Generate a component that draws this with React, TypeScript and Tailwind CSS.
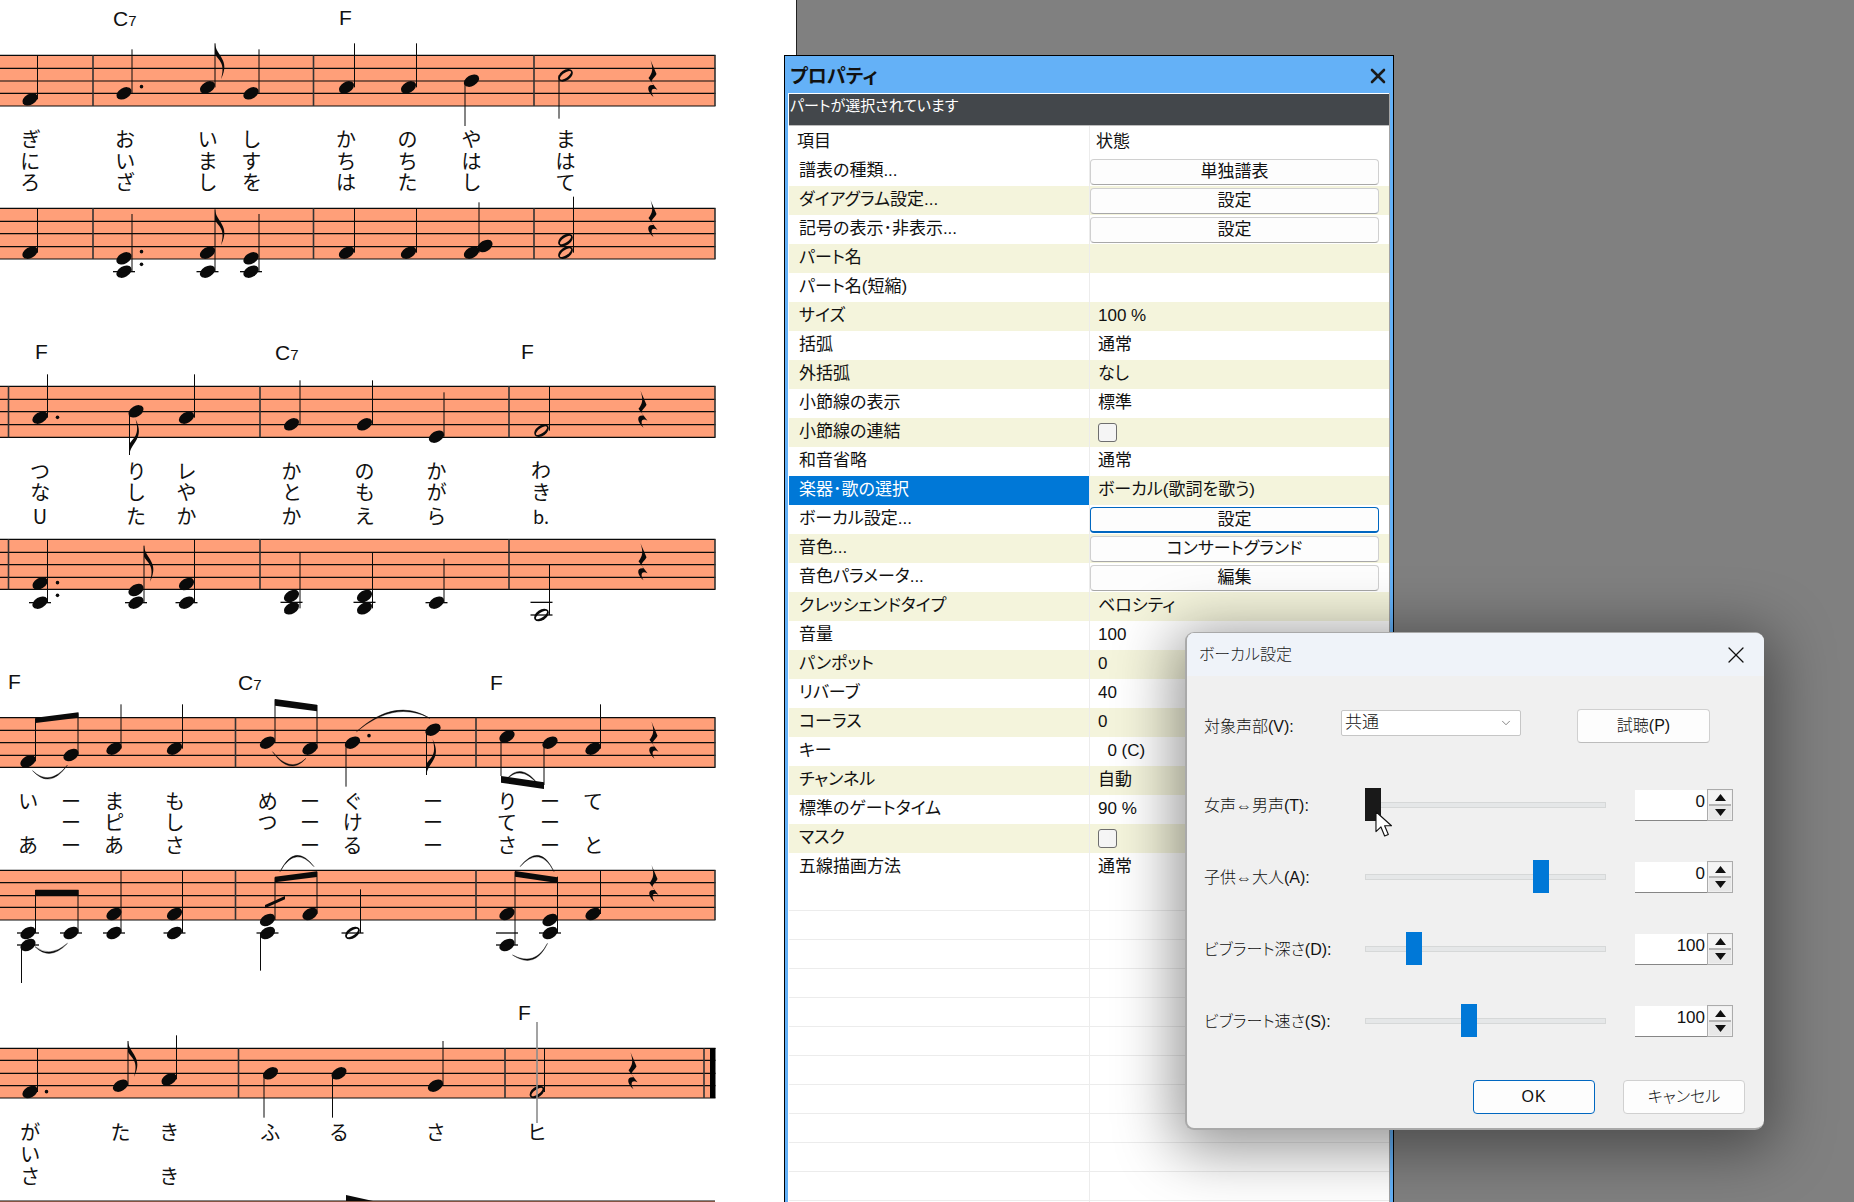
import React from "react";
import { X, ChevronDown } from "lucide-react";

type E = React.ReactNode;
const SX = (x: number) => x / 2;
const FONT = "'Noto Sans CJK JP', sans-serif";
const INK = "#0a0a0a";

function Staff({ off, lines, bars }: { off: number; lines: number[]; bars: number[] }) {
  const Y = (y: number) => y / 3 + off;
  const t = Y(lines[0]);
  const b = Y(lines[4]);
  return (
    <g>
      <rect x={0} y={t} width={715} height={b - t} fill="#ff9f79" />
      {lines.map((l, i) => (
        <line key={i} x1={0} x2={715.5} y1={Y(l)} y2={Y(l)} stroke={INK} strokeWidth={1.2} />
      ))}
      {bars.map((x, i) => (
        <line key={i} x1={SX(x)} x2={SX(x)} y1={t} y2={b} stroke="#333" strokeWidth={1.6} />
      ))}
    </g>
  );
}

function noteEls(off: number, list: any[]): E[] {
  const Y = (y: number) => y / 3 + off;
  const out: E[] = [];
  list.forEach((n, i) => {
    if (n.h) {
      n.h.forEach((p: number[], j: number) => {
        out.push(
          <ellipse key={`h${i}-${j}`} cx={SX(p[0])} cy={Y(p[1])} rx={8.2} ry={5.4} fill={INK} transform={`rotate(-30 ${SX(p[0])} ${Y(p[1])})`} />
        );
      });
    }
    if (n.o) {
      n.o.forEach((p: number[], j: number) => {
        const cx = SX(p[0]);
        const cy = Y(p[1]);
        out.push(
          <g key={`o${i}-${j}`} transform={`rotate(-35 ${cx} ${cy})`}>
            <ellipse cx={cx} cy={cy} rx={8.2} ry={5.2} fill={INK} />
            <ellipse cx={cx} cy={cy} rx={6.6} ry={2.5} fill={n.w ?? "#ff9f79"} />
          </g>
        );
      });
    }
    if (n.s) {
      const [x, a, z] = n.s;
      out.push(<line key={`s${i}`} x1={SX(x)} x2={SX(x)} y1={Y(a)} y2={Y(z)} stroke={INK} strokeWidth={1} />);
    }
    if (n.d) {
      n.d.forEach((p: number[], j: number) => {
        out.push(<circle key={`d${i}-${j}`} cx={SX(p[0])} cy={Y(p[1])} r={1.8} fill={INK} />);
      });
    }
    if (n.l) {
      n.l.forEach((p: number[], j: number) => {
        out.push(<line key={`l${i}-${j}`} x1={SX(p[0]) - 11} x2={SX(p[0]) + 11} y1={Y(p[1])} y2={Y(p[1])} stroke={INK} strokeWidth={1.3} />);
      });
    }
    if (n.fu) {
      const x = SX(n.fu[0]);
      const y = Y(n.fu[1]);
      out.push(<path key={`f${i}`} d={`M${x} ${y}C${x + 1} ${y + 13} ${x + 16} ${y + 16} ${x + 6} ${y + 36}C${x + 11} ${y + 19} ${x + 3} ${y + 17} ${x} ${y + 11}Z`} fill={INK} />);
    }
    if (n.fd) {
      const x = SX(n.fd[0]);
      const y = Y(n.fd[1]);
      out.push(<path key={`f${i}`} d={`M${x} ${y}C${x + 1} ${y - 13} ${x + 16} ${y - 16} ${x + 6} ${y - 36}C${x + 11} ${y - 19} ${x + 3} ${y - 17} ${x} ${y - 11}Z`} fill={INK} />);
    }
    if (n.r) {
      const x = SX(n.r[0]) - 2;
      const y = Y(n.r[1]);
      out.push(<path key={`r${i}`} d={`M${x} ${y}L${x + 6} ${y + 14}C${x + 5} ${y + 17} ${x + 1} ${y + 19} ${x + 1} ${y + 22}L${x + 7} ${y + 30}C${x + 2} ${y + 27} ${x - 1} ${y + 30} ${x + 3} ${y + 37}C${x - 4} ${y + 31} ${x - 4} ${y + 24} ${x + 3} ${y + 25}L${x - 2} ${y + 18}C${x + 2} ${y + 13} ${x + 3} ${y + 9} ${x} ${y}Z`} fill={INK} />);
    }
    if (n.b) {
      const [x1, y1, x2, y2, th] = n.b;
      out.push(<polygon key={`b${i}`} points={`${SX(x1)},${Y(y1)} ${SX(x2)},${Y(y2)} ${SX(x2)},${Y(y2 + th)} ${SX(x1)},${Y(y1 + th)}`} fill={INK} />);
    }
    if (n.c) {
      const [x1, y1, cx, cy, x2, y2] = n.c;
      out.push(<path key={`c${i}`} d={`M${SX(x1)} ${Y(y1)}Q${SX(cx)} ${Y(cy)} ${SX(x2)} ${Y(y2)}Q${SX(cx)} ${Y(cy + (cy > y1 ? -9 : 9))} ${SX(x1)} ${Y(y1)}Z`} fill={INK} stroke={INK} strokeWidth={0.4} />);
    }
  });
  return out;
}

function Lyrics({ off, ys, cols }: { off: number; ys: number[]; cols: [number, string][] }) {
  return (
    <g fontFamily={FONT} fontSize={20} fill="#111" textAnchor="middle">
      {cols.map(([x, s], i) =>
        Array.from(s).map((ch, j) =>
          ch === " " ? null : (
            <text key={`${i}-${j}`} x={SX(x)} y={ys[j] / 3 + off + 7}>
              {ch}
            </text>
          )
        )
      )}
    </g>
  );
}

function Chord({ x, y, t, sub }: { x: number; y: number; t: string; sub?: string }) {
  return (
    <text x={x} y={y} fontFamily="'Liberation Sans', sans-serif" fontSize={21} fill="#111">
      {t}
      {sub && <tspan fontSize={15}>{sub}</tspan>}
    </text>
  );
}

function Score() {
  return (
    <svg width={796} height={1202} viewBox="0 0 796 1202" className="block">
      {/* system 1 */}
      <Chord x={113} y={26} t="C" sub="7" />
      <Chord x={339} y={25} t="F" />
      <Staff off={0} lines={[166, 205, 243, 280, 318]} bars={[186, 627, 1068, 1430]} />
      <Staff off={0} lines={[625, 664, 701, 740, 777]} bars={[186, 627, 1068, 1430]} />
      {noteEls(0, [
        { h: [[60, 298]], s: [75, 166, 298] },
        { h: [[248, 280]], s: [264, 148, 280], d: [[283, 260]] },
        { h: [[415, 262]], s: [430, 130, 262], fu: [430, 130] },
        { h: [[502, 280]], s: [518, 148, 280] },
        { h: [[693, 262]], s: [709, 130, 262] },
        { h: [[817, 262]], s: [833, 130, 262] },
        { h: [[943, 242]], s: [930, 242, 378] },
        { o: [[1131, 226]], s: [1118, 226, 356] },
        { r: [1305, 180] },
        { h: [[60, 758]], s: [75, 625, 758] },
        { h: [[248, 775], [248, 815]], s: [264, 642, 815], d: [[283, 755], [283, 793]], l: [[248, 815]] },
        { h: [[415, 758], [415, 815]], s: [430, 628, 815], fu: [430, 628], l: [[415, 815]] },
        { h: [[502, 775], [502, 815]], s: [518, 642, 815], l: [[502, 815]] },
        { h: [[693, 758]], s: [709, 625, 758] },
        { h: [[817, 758]], s: [833, 625, 758] },
        { h: [[943, 758], [970, 738]], s: [958, 607, 758] },
        { o: [[1131, 720], [1131, 758]], s: [1147, 590, 758] },
        { r: [1305, 600] },
      ])}
      <Lyrics
        off={0}
        ys={[420, 485, 550]}
        cols={[
          [60, "ぎにろ"],
          [250, "おいざ"],
          [415, "いまし"],
          [503, "しすを"],
          [692, "かちは"],
          [815, "のちた"],
          [943, "やはし"],
          [1131, "まはて"],
        ]}
      />

      {/* system 2 */}
      <Chord x={35} y={359} t="F" />
      <Chord x={275} y={360} t="C" sub="7" />
      <Chord x={521} y={359} t="F" />
      <Staff off={320} lines={[199, 238, 275, 314, 352]} bars={[17, 520, 1018, 1430]} />
      <Staff off={320} lines={[658, 697, 734, 772, 808]} bars={[17, 520, 1018, 1430]} />
      {noteEls(320, [
        { h: [[80, 293]], s: [95, 163, 293], d: [[115, 292]] },
        { h: [[272, 274]], s: [259, 274, 405], fd: [259, 405] },
        { h: [[373, 293]], s: [389, 163, 293] },
        { h: [[583, 313]], s: [600, 181, 313] },
        { h: [[729, 313]], s: [745, 181, 313] },
        { h: [[873, 350]], s: [888, 217, 350] },
        { o: [[1083, 332]], s: [1099, 199, 332] },
        { r: [1285, 212] },
        { h: [[80, 790], [80, 848]], s: [95, 660, 848], d: [[115, 788], [115, 826]], l: [[80, 848]] },
        { h: [[272, 810], [272, 848]], s: [288, 677, 848], fu: [288, 677], l: [[272, 848]] },
        { h: [[373, 792], [373, 848]], s: [389, 660, 848], l: [[373, 848]] },
        { h: [[583, 828], [583, 865]], s: [600, 698, 865], l: [[583, 847]] },
        { h: [[729, 828], [729, 865]], s: [745, 698, 865], l: [[729, 847]] },
        { h: [[873, 848]], s: [888, 716, 848], l: [[873, 848]] },
        { o: [[1083, 885]], w: "#ffffff", s: [1099, 735, 885], l: [[1083, 847], [1083, 885]] },
        { r: [1285, 670] },
      ])}
      <Lyrics
        off={320}
        ys={[455, 520, 590]}
        cols={[
          [80, "つなU"],
          [272, "りした"],
          [373, "レやか"],
          [583, "かとか"],
          [729, "のもえ"],
          [873, "かがら"],
        ]}
      />
      <g fontFamily={FONT} fontSize={20} fill="#111" textAnchor="middle">
        <text x={541} y={478}>わ</text>
        <text x={541} y={500}>き</text>
        <text x={541} y={524} fontSize={18}>b.</text>
      </g>

      {/* system 3 */}
      <Chord x={8} y={689} t="F" />
      <Chord x={238} y={690} t="C" sub="7" />
      <Chord x={490} y={690} t="F" />
      <Staff off={650} lines={[203, 241, 278, 316, 352]} bars={[471, 952, 1430]} />
      <Staff off={650} lines={[661, 698, 737, 772, 810]} bars={[471, 952, 1430]} />
      {noteEls(650, [
        { h: [[56, 334]], s: [71, 205, 334] },
        { h: [[142, 315]], s: [156, 190, 315], b: [71, 203, 157, 187, 16] },
        { h: [[228, 296]], s: [242, 163, 296] },
        { h: [[349, 296]], s: [365, 163, 296] },
        { h: [[535, 278]], s: [550, 148, 278] },
        { h: [[620, 296]], s: [634, 165, 296], b: [550, 147, 634, 164, 20] },
        { h: [[705, 278]], s: [692, 278, 410], d: [[738, 257]] },
        { h: [[866, 239]], s: [853, 239, 375], fd: [853, 375] },
        { h: [[1014, 259]], s: [1002, 259, 378] },
        { h: [[1100, 278]], s: [1088, 278, 405], b: [1002, 378, 1088, 397, 20] },
        { h: [[1186, 296]], s: [1201, 163, 296] },
        { r: [1307, 215] },
        { c: [65, 362, 100, 420, 135, 345] },
        { c: [545, 305, 580, 380, 612, 325] },
        { c: [713, 245, 790, 140, 860, 205] },
        { c: [1008, 398, 1040, 325, 1080, 410] },
        { h: [[56, 849], [56, 885]], s: [43, 885, 999], l: [[56, 849], [56, 885]] },
        { s: [71, 720, 849] },
        { h: [[142, 849]], s: [156, 720, 849], b: [71, 719, 157, 719, 17], l: [[142, 849]] },
        { h: [[228, 792], [228, 849]], s: [242, 661, 849], l: [[228, 849]] },
        { h: [[349, 792], [349, 849]], s: [365, 661, 849], l: [[349, 849]] },
        { h: [[535, 810], [535, 849]], s: [521, 849, 962], l: [[535, 849]] },
        { s: [550, 682, 810] },
        { h: [[620, 792]], s: [634, 665, 792], b: [550, 680, 634, 664, 17] },
        { b: [530, 765, 570, 738, 10] },
        { o: [[705, 849]], w: "#ffffff", s: [721, 718, 849], l: [[705, 849]] },
        { h: [[1014, 792], [1014, 885]], s: [1030, 665, 885], l: [[1014, 849], [1014, 885]] },
        { h: [[1100, 810], [1100, 849]], s: [1115, 680, 849], b: [1030, 663, 1115, 682, 17], l: [[1100, 849]] },
        { h: [[1186, 792]], s: [1201, 661, 792] },
        { r: [1307, 645] },
        { c: [70, 890, 100, 935, 135, 880] },
        { c: [560, 665, 590, 575, 628, 650] },
        { c: [1040, 650, 1080, 575, 1108, 665] },
        { c: [1025, 915, 1070, 960, 1095, 880] },
      ])}
      <Lyrics
        off={650}
        ys={[455, 520, 588]}
        cols={[
          [56, "い あ"],
          [142, "ーーー"],
          [228, "まピあ"],
          [349, "もしさ"],
          [535, "めつ "],
          [620, "ーーー"],
          [705, "ぐける"],
          [866, "ーーー"],
          [1014, "りてさ"],
          [1100, "ーーー"],
          [1186, "て と"],
        ]}
      />

      {/* system 4 */}
      <Chord x={518} y={1020} t="F" />
      <Staff off={960} lines={[265, 301, 340, 377, 414]} bars={[477, 1010, 1408, 1425]} />
      <rect x={710} y={1048} width={5.5} height={50} fill="#000" />
      {noteEls(960, [
        { h: [[60, 396]], s: [75, 265, 396], d: [[93, 395]] },
        { h: [[241, 377]], s: [256, 243, 377], fu: [256, 243] },
        { h: [[338, 358]], s: [353, 226, 358] },
        { h: [[541, 340]], s: [528, 340, 473] },
        { h: [[678, 340]], s: [665, 340, 473] },
        { h: [[871, 377]], s: [886, 243, 377] },
        { o: [[1074, 396]], s: [1089, 265, 396] },
        { r: [1265, 277] },
      ])}
      <line x1={537} x2={537} y1={1022} y2={1123} stroke="#8c8c8c" strokeWidth={1.6} />
      <Lyrics
        off={960}
        ys={[520, 585, 650]}
        cols={[
          [60, "がいさ"],
          [241, "た"],
          [338, "き き"],
          [541, "ふ"],
          [678, "る"],
          [871, "さ"],
          [1074, "ヒ"],
        ]}
      />
      <rect x={0} y={1201} width={715} height={2} fill="#ff9f79" />
      <line x1={0} x2={715} y1={1201} y2={1201} stroke={INK} strokeWidth={1.2} />
      <polygon points="346,1195 373,1201 346,1201" fill={INK} />
    </svg>
  );
}

type Row = { k: string; v?: string; btn?: string; focus?: boolean; check?: boolean; sel?: boolean };
const rows: Row[] = [
  { k: "譜表の種類...", btn: "単独譜表" },
  { k: "ダイアグラム設定...", btn: "設定" },
  { k: "記号の表示･非表示...", btn: "設定" },
  { k: "パート名" },
  { k: "パート名(短縮)" },
  { k: "サイズ", v: "100 %" },
  { k: "括弧", v: "通常" },
  { k: "外括弧", v: "なし" },
  { k: "小節線の表示", v: "標準" },
  { k: "小節線の連結", check: true },
  { k: "和音省略", v: "通常" },
  { k: "楽器･歌の選択", v: "ボーカル(歌詞を歌う)", sel: true },
  { k: "ボーカル設定...", btn: "設定", focus: true },
  { k: "音色...", btn: "コンサートグランド" },
  { k: "音色パラメータ...", btn: "編集" },
  { k: "クレッシェンドタイプ", v: "ベロシティ" },
  { k: "音量", v: "100" },
  { k: "パンポット", v: "0" },
  { k: "リバーブ", v: "40" },
  { k: "コーラス", v: "0" },
  { k: "キー", v: "\u00a0\u00a00 (C)" },
  { k: "チャンネル", v: "自動" },
  { k: "標準のゲートタイム", v: "90 %" },
  { k: "マスク", check: true },
  { k: "五線描画方法", v: "通常" },
];

function PropRow({ r, i }: { r: Row; i: number }) {
  const beige = i % 2 === 1;
  return (
    <div className={`grid grid-cols-[300px_1px_299px] h-[29px] text-[17px] leading-[27px] text-[#111] ${beige ? "bg-[#f4f4dc]" : "bg-white"}`}>
      <div className={`pl-[10px] whitespace-nowrap ${r.sel ? "bg-[#0078d7] text-white" : ""}`}>{r.k}</div>
      <div className="bg-[#ececec]" />
      <div className="pl-[8px] pr-[2px] flex items-center whitespace-nowrap">
        {r.v && <span className="leading-[27px] self-start">{r.v}</span>}
        {r.btn && (
          <div
            className={`w-full h-[26px] -ml-[8px] rounded-[4px] flex items-center justify-center bg-[#fdfdfd] border ${
              r.focus ? "border-[#0067c0] border-b-[2px]" : "border-[#d0d0d0] border-b-[#a8a8a8]"
            }`}
          >
            {r.btn}
          </div>
        )}
        {r.check && <div className="w-[19px] h-[19px] rounded-[3px] bg-[#f5f5f5] border border-[#6e6e6e]" />}
      </div>
    </div>
  );
}

function PropertyWindow() {
  return (
    <div className="absolute left-[784px] top-[55px] w-[610px] h-[1160px] bg-[#64b1f7] border border-black flex flex-col px-[3px]">
      <div className="h-[37px] shrink-0 flex items-center justify-between pl-[2px] pr-[1px]">
        <span className="text-[19px] font-bold text-[#111] leading-none pt-[4px]">プロパティ</span>
        <X size={24} strokeWidth={2.6} color="#1a1a1a" className="mt-[3px] -mr-[1px]" />
      </div>
      <div className="flex-1 bg-white border-l border-r border-l-white border-r-[#a4a4a4]">
        <div className="h-[33px] bg-[#43474b] border-t border-b border-white border-b-[#bdbdbd] text-white text-[15px] leading-[24px] pl-[1px] whitespace-nowrap">
          パートが選択されています
        </div>
        <div className="grid grid-cols-[300px_1px_299px] h-[31px] text-[17px] leading-[31px] text-[#111] bg-white">
          <div className="pl-[8px]">項目</div>
          <div className="bg-[#ececec]" />
          <div className="pl-[6px]">状態</div>
        </div>
        {rows.map((r, i) => (
          <PropRow key={r.k} r={r} i={i} />
        ))}
        {Array.from({ length: 12 }).map((_, i) => (
          <div key={i} className="grid grid-cols-[300px_1px_299px] h-[29px] border-b border-[#ececec] bg-white">
            <div />
            <div className="bg-[#ececec]" />
            <div />
          </div>
        ))}
      </div>
    </div>
  );
}

function Spin({ value }: { value: number }) {
  return (
    <div className="flex h-[32px] items-stretch">
      <div className="w-[72px] h-[31px] mt-[1px] bg-white border-b border-[#868686] text-right pr-[2px] text-[17px] leading-[24px] text-[#111]">{value}</div>
      <div className="w-[26px] h-[32px] border border-[#ababab] bg-[#efefef] flex flex-col p-[1px]">
        <div className="flex-1 bg-[#f4f4f4] flex items-center justify-center border-b-2 border-[#b4b4b4]">
          <svg width="11" height="7" viewBox="0 0 11 7"><polygon points="5.5,0 11,7 0,7" fill="#111" /></svg>
        </div>
        <div className="flex-1 bg-[#e8e8e8] flex items-center justify-center">
          <svg width="11" height="7" viewBox="0 0 11 7"><polygon points="0,0 11,0 5.5,7" fill="#111" /></svg>
        </div>
      </div>
    </div>
  );
}

const sliders = [
  { label: "女声⇔男声(T):", left: 0, value: 0, dark: true },
  { label: "子供⇔大人(A):", left: 168, value: 0 },
  { label: "ビブラート深さ(D):", left: 41, value: 100 },
  { label: "ビブラート速さ(S):", left: 96, value: 100 },
];

function SliderRow({ s }: { s: (typeof sliders)[number] }) {
  return (
    <div className="flex items-center h-[33px]">
      <div className="w-[161px] text-[16px] whitespace-nowrap text-[#111] pt-[3px]">{s.label}</div>
      <div className="relative w-[241px] h-[33px] flex items-center">
        <div className="w-full h-[6px] bg-[#e5e7e8] border border-[#d6d8d8]" />
        <div
          className={`absolute top-0 w-[16px] h-[33px] ${s.dark ? "bg-[#191919]" : "bg-[#0078d7]"}`}
          style={{ left: s.left }}
        />
      </div>
      <div className="ml-[29px]">
        <Spin value={s.value} />
      </div>
    </div>
  );
}

function VocalDialog() {
  return (
    <div className="absolute left-[1185px] top-[632px] w-[579px] h-[498px] rounded-[9px] bg-[#f0f0f0] border-l-2 border-b-2 border-t border-[#a9a9a9] border-r-0 shadow-[0_10px_60px_10px_rgba(0,0,0,0.42)] overflow-hidden flex flex-col font-light">
      <div className="h-[43px] shrink-0 bg-[#eff3f9] flex items-center justify-between pl-[12px] pr-[14px]">
        <span className="text-[16px] text-[#222]">ボーカル設定</span>
        <X size={28} strokeWidth={1.1} color="#111" />
      </div>
      <div className="pl-[17px] pt-[33px] flex flex-col">
        <div className="flex items-center h-[34px]">
          <div className="w-[137px] text-[16px] text-[#111] whitespace-nowrap pt-[2px]">対象声部(V):</div>
          <div className="w-[180px] h-[26px] -mt-[7px] bg-white border border-[#c6c6c6] rounded-[2px] flex items-center justify-between pl-[3px] pr-[7px] text-[17px] text-[#111]">
            共通
            <ChevronDown size={14} strokeWidth={1.2} color="#555" />
          </div>
          <div className="ml-[56px] w-[133px] h-[34px] bg-[#fdfdfd] border border-[#d0d0d0] border-b-[#bcbcbc] rounded-[4px] flex items-center justify-center text-[16px] text-[#111]">
            試聴(P)
          </div>
        </div>
        <div className="flex flex-col gap-[39px] mt-[45px]">
          {sliders.map((s) => (
            <SliderRow key={s.label} s={s} />
          ))}
        </div>
        <div className="flex justify-end gap-[28px] mt-[43px] pr-[19px]">
          <div className="w-[122px] h-[34px] bg-[#fdfdfd] border border-[#0067c0] rounded-[4px] flex items-center justify-center text-[16px] text-[#111] tracking-[1px]">OK</div>
          <div className="w-[122px] h-[34px] bg-[#fdfdfd] border border-[#d0d0d0] rounded-[4px] flex items-center justify-center text-[16px] text-[#111]">キャンセル</div>
        </div>
      </div>
    </div>
  );
}

function Cursor() {
  return (
    <svg className="absolute left-[1375px] top-[811px]" width="19" height="27" viewBox="0 0 13 19">
      <path d="M0.5 0.5V14.5L4 11.2L6.6 17.6L9.2 16.5L6.6 10.4H11.4Z" fill="#fff" stroke="#111" strokeWidth="0.8" strokeLinejoin="round" />
    </svg>
  );
}

export default function App() {
  return (
    <div className="relative w-[1854px] h-[1202px] overflow-hidden flex bg-[#808080] font-['Liberation_Sans','Noto_Sans_CJK_JP',sans-serif] [font-feature-settings:'palt']">
      <div className="w-[797px] h-full bg-white border-r border-[#222] shrink-0">
        <Score />
      </div>
      <PropertyWindow />
      <VocalDialog />
      <Cursor />
    </div>
  );
}
